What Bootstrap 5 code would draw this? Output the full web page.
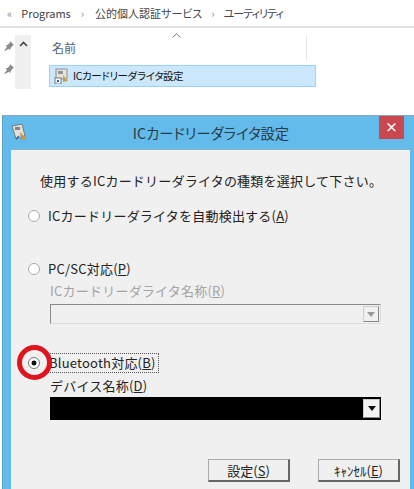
<!DOCTYPE html>
<html lang="ja">
<head>
<meta charset="UTF-8">
<meta name="viewport" content="width=device-width, initial-scale=1.0">
<title>ICカードリーダライタ設定</title>
<link href="https://cdn.jsdelivr.net/npm/bootstrap@5.3.1/dist/css/bootstrap.min.css" rel="stylesheet">
<style>
html, body { height: 489px; overflow: hidden; background: #fff; }
body { font-family: "Noto Sans CJK JP", "Liberation Sans", sans-serif; color: #222; }

/* explorer part */
.explorer { height: 115px; font-feature-settings: "palt"; }
.crumbs { height: 28px; padding-left: 7px; gap: 9px; font-size: 11px; color: #444; border-bottom: 2px solid #e2e2e2; }
.crumbs .sep { color: #888; font-size: 11px; }
.crumb-sep1 { margin-left: 1px; }
.crumb-mid { margin-left: 2px; }
.crumb-tight { letter-spacing: -1px; }
.file-area { height: 62px; }
.pin-col { width: 15px; padding-top: 12px; gap: 11px; }
.scroll-col { width: 16px; height: 54px; margin-top: 7px; background: #f0f0f0; padding-top: 6px; }
.file-col { width: 267px; margin-left: 18px; }
.head-row { padding: 0 0 0 3px; font-size: 12px; color: #4c607a; border-right: 1px solid #e2e5e8; margin-right: 9px; margin-top: 7px; height: 25px; position: relative; }
.sort-arrow { position: absolute; left: 123px; top: -2px; }
.file-row { height: 22px; margin-top: 5px; background: #cce8ff; border: 1px solid #99d1ff; padding-left: 4px; gap: 3px; font-size: 10.5px; letter-spacing: -.35px; color: #111; }

/* dialog */
.dialog { margin-left: 2px; height: 374px; background: #63bbec; border-top: 1px solid #8fa8b8; border-left: 1px solid #5a9cc6; padding: 0 4px 0 8px; position: relative; }
.dialog-title { height: 33px; font-size: 14.3px; color: #2a3a45; font-feature-settings: "palt"; }
.dialog-title .title-text { margin-left: 3px; width: 358px; text-align: center; }
.close-btn { position: absolute; left: 376px; top: 0; width: 25px; height: 23px; background: #c9474f; color: #fff; font-size: 13px; font-weight: 700; line-height: 21px; text-align: center; }
.panel { height: 341px; background: #f0f0f0; border-top: 1px solid #8cb4cc; font-size: 13px; letter-spacing: .22px; position: relative; }
.prompt { padding: 21px 0 0 29px; height: 56px; line-height: 20px; }
.opt-row { height: 20px; line-height: 20px; padding-left: 17px; gap: 8px; }
.opt-row .form-check-input { width: 12px; height: 12px; margin: 0; flex: none; background-color: #fff; border: 1px solid #aaa; box-shadow: none; }
.opt-row .form-check-input:checked { background-color: #fff; border-color: #777; background-image: radial-gradient(circle, #111 0 2.2px, transparent 2.8px); }
.opt-pcsc { margin-top: 33px; }
.opt-bt { margin-top: 29px; }
.sub-label { padding-left: 39px; height: 20px; line-height: 20px; margin-top: 2px; }
.sub-dev { margin-top: 3px; }
.sub-off { color: #a3a3a3; }
.combo { margin-left: 39px; margin-top: 3px; width: 331px; height: 20px; background: #f0f0f0; border: 1px solid #8a8a8a; border-right-color: #ddd; border-bottom-color: #ddd; }
.combo-dark { height: 23px; margin-top: 1px; background: #000; border: 0; }
.combo-fill { flex: 1; }
.combo-arrow { width: 16px; margin: 1px; background: #f0f0f0; border: 1px solid #ccc; border-right-color: #888; border-bottom-color: #888; }
.combo-arrow i { border-left: 4px solid transparent; border-right: 4px solid transparent; border-top: 5px solid #999; }
.combo-dark .combo-arrow { margin: 2px 1px 2px 0; width: 17px; background: #f4f4f4; }
.combo-dark .combo-arrow i { border-top-color: #111; }
.focus-box { border: 1px dotted #555; padding: 0 2px 0 1px; margin-left: -1px; height: 20px; line-height: 18px; }
.btn-row { gap: 28px; padding: 39px 10px 0 0; }
.win-btn { width: 82px; height: 23px; padding: 0; font-size: 13px; line-height: 19px; color: #222; background: #f0f0f0; border: 1px solid #aaa; border-right: 2px solid #666; border-bottom: 2px solid #666; border-radius: 0; }
.mark-ring { position: absolute; left: 6px; top: 195px; width: 35px; height: 35px; border: 5px solid #e0141e; border-radius: 50%; }
</style>
</head>
<body>

<div class="explorer">
    <div class="crumbs d-flex align-items-center">
        <span class="sep">«</span>
        <span>Programs</span>
        <span class="sep crumb-sep1">›</span>
        <span class="crumb-mid">公的個人認証サービス</span>
        <span class="sep">›</span>
        <span class="crumb-tight">ユーティリティ</span>
    </div>
    <div class="file-area d-flex">
        <div class="pin-col d-flex flex-column align-items-end">
            <svg width="12" height="12" viewBox="0 0 12 12"><path d="M7 1l4 4-1.200 .6-2.300 2.600-.3 2-1.500-1.500L2 11l-.6-.6 2.600-3.700L2.500 5.200l2-.3L7 2.500z" fill="#8b8b8b"/></svg>
            <svg width="12" height="12" viewBox="0 0 12 12"><path d="M7 1l4 4-1.200 .6-2.300 2.600-.3 2-1.500-1.500L2 11l-.6-.6 2.600-3.700L2.500 5.200l2-.3L7 2.500z" fill="#8b8b8b"/></svg>
        </div>
        <div class="scroll-col d-flex justify-content-center">
            <svg width="9" height="6" viewBox="0 0 9 6"><path d="M1 5l3.500-3.500L8 5" fill="none" stroke="#444" stroke-width="1.600"/></svg>
        </div>
        <div class="file-col">
            <div class="head-row d-flex align-items-center">
                <span>名前</span>
                <svg class="sort-arrow" width="9" height="5" viewBox="0 0 9 5"><path d="M.5 4.500L4.500 .8l4 3.700" fill="none" stroke="#777"/></svg>
            </div>
            <div class="file-row d-flex align-items-center">
                <svg width="16" height="16" viewBox="0 0 16 16">
                    <rect x="2" y="1" width="11" height="10" fill="#e6e3da" stroke="#8b8f94"/>
                    <rect x="4" y="3" width="5" height="3" fill="#8d9499"/>
                    <path d="M9 7l5 6-5 1z" fill="#c9a24a"/>
                    <rect x="1" y="10" width="6" height="6" fill="#fff" stroke="#777"/>
                    <path d="M2.500 14.500l2-2m-1.500 0h1.500v1.500" stroke="#1e62c0" fill="none"/>
                </svg>
                <span>ICカードリーダライタ設定</span>
            </div>
        </div>
    </div>
</div>

<div class="dialog">
    <div class="dialog-title d-flex align-items-center">
        <svg width="18" height="20" viewBox="0 0 18 20">
            <path d="M1 3l10-2 3 12-9 3z" fill="#e4e0d6" stroke="#6d7c88"/>
            <rect x="4" y="4" width="5" height="3" fill="#7e8890"/>
            <path d="M9 9l7 7-6 1z" fill="#b89a50"/>
            <path d="M5 16l3-3" stroke="#2c5f9e" stroke-width="1.500"/>
        </svg>
        <div class="title-text">ICカードリーダライタ設定</div>
    </div>
    <div class="close-btn">×</div>

    <div class="panel">
        <div class="prompt">使用するICカードリーダライタの種類を選択して下さい。</div>

        <div class="opt-row d-flex align-items-center">
            <input class="form-check-input" type="radio" name="reader" id="r1">
            <label for="r1">ICカードリーダライタを自動検出する(<u>A</u>)</label>
        </div>

        <div class="opt-row opt-pcsc d-flex align-items-center">
            <input class="form-check-input" type="radio" name="reader" id="r2">
            <label for="r2">PC/SC対応(<u>P</u>)</label>
        </div>
        <div class="sub-label sub-off">ICカードリーダライタ名称(<u>R</u>)</div>
        <div class="combo d-flex">
            <div class="combo-fill"></div>
            <div class="combo-arrow d-flex align-items-center justify-content-center"><i></i></div>
        </div>

        <div class="opt-row opt-bt d-flex align-items-center">
            <input class="form-check-input" type="radio" name="reader" id="r3" checked>
            <label for="r3" class="focus-box">Bluetooth対応(<u>B</u>)</label>
        </div>
        <div class="sub-label sub-dev">デバイス名称(<u>D</u>)</div>
        <div class="combo combo-dark d-flex">
            <div class="combo-fill"></div>
            <div class="combo-arrow d-flex align-items-center justify-content-center"><i></i></div>
        </div>

        <div class="btn-row d-flex justify-content-end">
            <button type="button" class="btn win-btn">設定(<u>S</u>)</button>
            <button type="button" class="btn win-btn">ｷｬﾝｾﾙ(<u>E</u>)</button>
        </div>

        <div class="mark-ring"></div>
    </div>
</div>

<script src="https://cdn.jsdelivr.net/npm/bootstrap@5.3.1/dist/js/bootstrap.bundle.min.js"></script>
</body>
</html>
